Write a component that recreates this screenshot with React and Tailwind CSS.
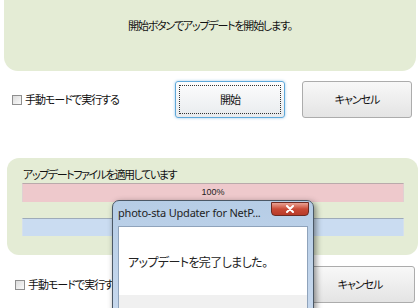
import React from 'react';

const jp = "font-['Noto_Sans_CJK_JP',sans-serif] [font-feature-settings:'palt']";

const Checkbox = () => (
    <span className="inline-block w-[10px] h-[10px] border border-[#8f8f8f] bg-gradient-to-br from-[#dcdcdc] to-[#fafafa] shrink-0" />
);

const ModeRow = ({ shift }) => (
    <div className={`flex items-center h-[37px] ${shift ? 'pl-[15px]' : 'pl-[12px]'}`}>
        <div className="w-[163px] flex items-center">
            <Checkbox />
            <span className={`${jp} ml-[3px] text-[11px] tracking-[-1px] leading-none text-[#111]`}>手動モードで実行する</span>
        </div>
        <button className="w-[110px] h-[37px] rounded-[3px] border border-[#5fa8d9] bg-gradient-to-b from-[#fdfdfd] to-[#e8ebee] shadow-[0_0_3px_#9cc8ea] p-[3px]">
            <div className={`${jp} w-full h-full border border-dotted border-[#333] flex items-center justify-center text-[11px] tracking-[-1px] text-[#111]`}>
                開始
            </div>
        </button>
        <button className={`${jp} ml-[17px] w-[110px] h-[37px] rounded-[3px] border border-[#acacac] bg-gradient-to-b from-[#f8f8f8] to-[#e4e4e4] flex items-center justify-center text-[11px] tracking-[-1px] text-[#111]`}>
            キャンセル
        </button>
    </div>
);

const App = () => {
    return (
        <div className="w-[420px] h-[308px] bg-white relative overflow-hidden">
            <div className="mx-[4px] h-[71px] bg-[#e4ecd5] rounded-b-[14px] flex justify-center pt-[20px]">
                <span className={`${jp} text-[11px] tracking-[-1.2px] leading-none text-[#111]`}>開始ボタンでアップデートを開始します。</span>
            </div>

            <div className="mt-[10px]">
                <ModeRow />
            </div>

            <div className="mt-[40px] ml-[7px] mr-[2px] h-[97px] rounded-[12px] bg-[#e4ecd5] pt-[9px] pl-[15px] pr-[14px]">
                <div className={`${jp} text-[11px] tracking-[-1.4px] leading-[14px] text-[#111] pl-[1px]`}>アップデートファイルを適用しています</div>
                <div className="mt-[2px] h-[19px] bg-[#eec9cc] border-t border-[#b9aaab] border-x border-x-[#e0d0d2] flex items-center justify-center">
                    <span className="font-['Liberation_Sans',sans-serif] text-[9px] text-[#222]">100%</span>
                </div>
                <div className="mt-[16px] h-[18px] bg-[#cadcf1] border-t border-[#9eabb9] border-x border-x-[#d5e0ec]" />
            </div>

            <div className="mt-[11px]">
                <ModeRow shift />
            </div>

            <div className="absolute left-[112px] top-[200px] w-[202px] h-[120px] rounded-t-[7px] border border-[#4b5866] bg-gradient-to-b from-[#b6cde6] to-[#c8d9ee] shadow-[2px_2px_6px_rgba(0,0,0,0.45)] px-[5px]">
                <div className="h-[25px] flex items-center">
                    <span className="font-['Noto_Sans',sans-serif] text-[11px] tracking-[-0.2px] text-[#1e1e1e]">photo-sta Updater for NetP...</span>
                </div>
                <div className="absolute left-[158px] top-[1px] w-[38px] h-[14px] rounded-b-[4px] border border-[#6b2a22] bg-gradient-to-b from-[#e8a193] via-[#c94a36] to-[#b83a28] flex items-center justify-center">
                    <svg width="10" height="8" viewBox="0 0 10 8">
                        <path d="M2 1 L8 7 M8 1 L2 7" stroke="#fff" strokeWidth="2" strokeLinecap="round" />
                    </svg>
                </div>
                <div className="h-[95px] bg-white border border-[#8fa3bb] flex flex-col">
                    <div className="h-[68px] flex items-center pl-[9px] pt-[2px]">
                        <span className={`${jp} text-[12px] tracking-[-0.6px] text-[#222]`}>アップデートを完了しました。</span>
                    </div>
                    <div className="flex-1 bg-[#f0f0f0]" />
                </div>
            </div>
        </div>
    );
};

export default App;
